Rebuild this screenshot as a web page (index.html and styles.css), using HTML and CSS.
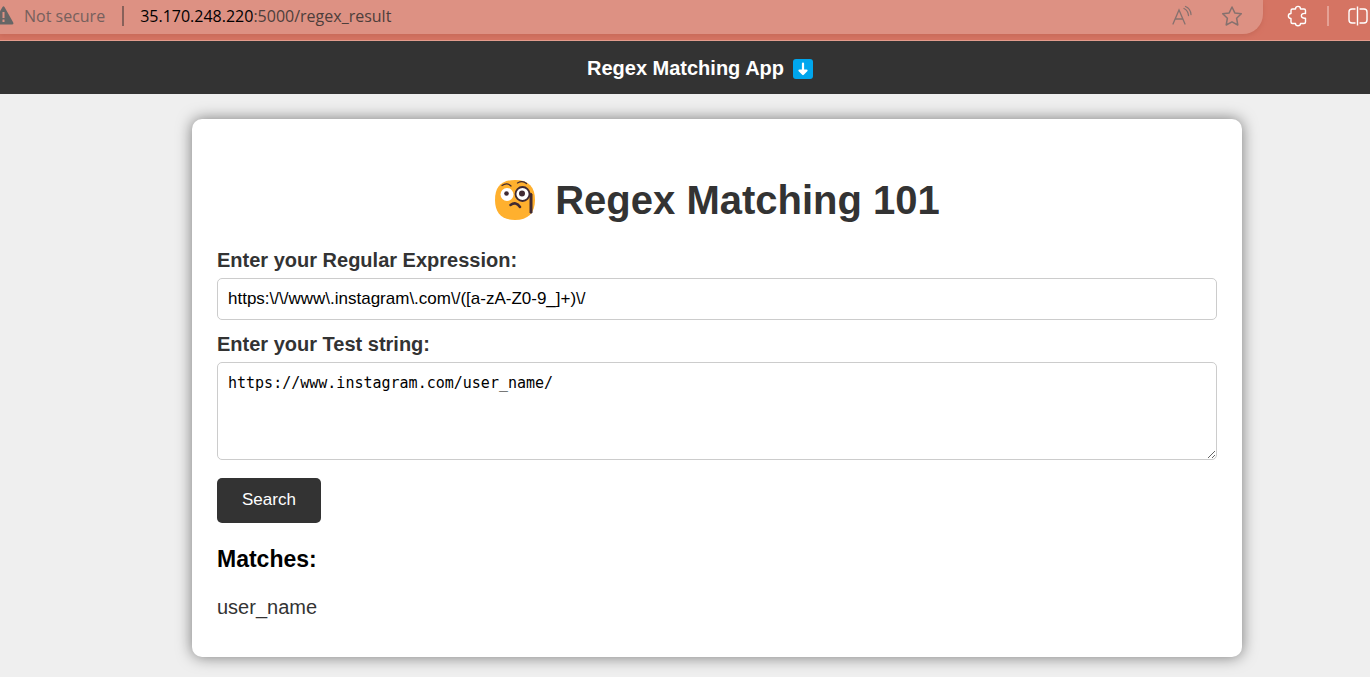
FILE: index.html
```html
<!DOCTYPE html>
<html lang="en">
<head>
<meta charset="utf-8">
<meta name="viewport" content="width=device-width, initial-scale=1">
<title>Regex Matching App</title>
<link rel="stylesheet" href="styles.css">
</head>
<body>
<div class="browser-bar">
  <div class="address">
    <svg class="warning" width="14" height="20" viewBox="0 0 14 20" aria-hidden="true">
      <path d="M2.500 1Q3.500-.5 4.500 1L13.200 16.500Q14 18.500 12 18.500H-6Q-7.500 18.500-6.500 16.500Z" fill="#666"/>
      <path d="M3.500 6v6M3.500 13.500v2.500" stroke="#dd9183" stroke-width="2"/>
    </svg>
    <span class="security">Not secure</span>
    <span class="divider"></span>
    <span class="url"><span class="host">35.170.248.220</span>:5000/regex_result</span>
    <button class="icon-button read" type="button" aria-label="Read aloud">
      <svg width="22" height="22" viewBox="0 0 22 22" fill="none" stroke="#86716e" stroke-width="1.300" stroke-linecap="round">
        <path d="M2 19 8 5l6 14M4.300 14h7.500M13 3.500q4 2 4.500 7M14.500 1.500q5 2 5.500 8"/>
      </svg>
    </button>
    <button class="icon-button" type="button" aria-label="Add to favorites">
      <svg width="22" height="22" viewBox="0 0 22 22" fill="none" stroke="#86716e" stroke-width="1.500" stroke-linejoin="round">
        <path d="m11 2 2.800 5.900 6.500.8-4.700 4.500 1.200 6.800-5.800-3.200L5.200 20l1.200-6.800L1.700 8.700l6.500-.8Z"/>
      </svg>
    </button>
  </div>
  <button class="icon-button extensions" type="button" aria-label="Extensions">
    <svg width="22" height="22" viewBox="0 0 22 22" fill="none" stroke="#fff" stroke-width="1.400" stroke-linejoin="round">
      <path d="M5.500 4H8.500c0-3.500 5-3.500 5 0h3.500q1.500 0 1.500 1.500V8.500c-5.500-1-5.500 5.500 0 4.700V17q0 1.500-1.500 1.500H13.500c0 3-5 3-5 0H5.500Q4 18.500 4 17v-3.500c-3.500 0-3.500-5 0-5v-3Q4 4 5.500 4Z"/>
    </svg>
  </button>
  <span class="divider light"></span>
  <button class="icon-button split" type="button" aria-label="Split screen">
    <svg width="22" height="22" viewBox="0 0 22 22" fill="none" stroke="#fff" stroke-width="1.400">
      <path d="M8.500 4H5Q2 4 2 7v8q0 3 3 3h3.500M12.500 4H17q3 0 3 3v8q0 3-3 3h-4.500M10.500 1.500v19"/>
    </svg>
  </button>
</div>
<header class="site-header">
  <span>Regex Matching App</span>
  <svg width="20" height="20" viewBox="0 0 20 20" role="img" aria-label="Down arrow">
    <rect width="20" height="20" rx="3" fill="#00a6ed"/>
    <path d="M10 4.500v10M6.500 11.500 10 15l3.500-3.500Z" fill="#fff" stroke="#fff" stroke-width="2.200" stroke-linecap="round" stroke-linejoin="round"/>
  </svg>
</header>
<main class="card">
  <h1 class="title">
    <svg width="42" height="42" viewBox="0 0 42 42" role="img" aria-label="Face with monocle">
      <path d="M21 1C35 1 41 8 41 21S34 41 21 41 1 34 1 21 7 1 21 1Z" fill="#ffb02e"/>
      <circle cx="13" cy="15.500" r="6.500" fill="#fff"/>
      <circle cx="12.500" cy="14.500" r="2.300" fill="#402a32"/>
      <circle cx="28.500" cy="15" r="7" fill="#fff" stroke="#402a32" stroke-width="1.800"/>
      <circle cx="28" cy="14.500" r="3" fill="#402a32"/>
      <path d="M8 6.500q5-3.500 9 .5M23.500 4q5-3 9 .5" fill="none" stroke="#402a32" stroke-width="1.200" stroke-linecap="round"/>
      <path d="M36 15h2v19h-2ZM36 14l2 1" fill="#402a32" stroke="#402a32" stroke-linejoin="round"/>
      <path d="M16.500 26q5.500-4 9.500 2" fill="none" stroke="#402a32" stroke-width="2.600" stroke-linecap="round"/>
    </svg>
    <span>Regex Matching 101</span>
  </h1>
  <form class="form">
    <label class="label" for="regex">Enter your Regular Expression:</label>
    <input class="field" id="regex" type="text" value="https:\/\/www\.instagram\.com\/([a-zA-Z0-9_]+)\/">
    <label class="label" for="test">Enter your Test string:</label>
    <textarea class="field area" id="test" spellcheck="false">https://www.instagram.com/user_name/</textarea>
    <button class="search" type="button">Search</button>
  </form>
  <h2 class="matches">Matches:</h2>
  <p class="result">user_name</p>
</main>
</body>
</html>
```
FILE: styles.css
```css
* { box-sizing: border-box; }
body {
  margin: 0;
  background: #efefef;
  color: #333;
  font-family: "Liberation Sans", Arial, sans-serif;
  font-size: 20px;
}
.browser-bar {
  display: flex;
  align-items: flex-start;
  height: 41px;
  overflow: hidden;
  background: #d57463;
  border-bottom: 1px solid #e39c8d;
  font-family: "Open Sans", "Noto Sans", sans-serif;
  font-size: 16px;
}
.address {
  display: flex;
  flex: 1;
  align-items: center;
  height: 34px;
  padding: 0 20px 2px 0;
  background: #dd9183;
  border-radius: 0 0 20px 0;
  box-shadow: 0 2px 4px #c76a59;
}
.warning { flex: none; margin-right: 10px; }
.security { color: #76605d; }
.divider {
  width: 2px;
  height: 20px;
  margin: 0 16px 0 17px;
  background: #87615a;
}
.url { flex: 1; color: #4d3e3b; }
.host { color: #000; }
.icon-button {
  display: flex;
  flex: none;
  padding: 0;
  background: none;
  border: 0;
}
.read { margin-right: 28px; }
.extensions { margin: 5px 0 0 24px; }
.light {
  margin: 6px 18px 0;
  background: #e5a195;
}
.split { margin: 5px 1px 0 0; }
.site-header {
  display: flex;
  justify-content: center;
  align-items: center;
  gap: 9px;
  padding: 16px 0 14px 30px;
  background: #333;
  color: #fff;
  font-weight: bold;
  line-height: 23px;
}
.card {
  width: calc(100% - 320px);
  max-width: 1050px;
  margin: 25px 128px 20px auto;
  padding: 25px;
  background: #fff;
  border-radius: 10px;
  box-shadow: 0 0 15px rgba(0, 0, 0, 0.5);
}
.title {
  display: flex;
  justify-content: center;
  align-items: center;
  gap: 19px;
  margin: 33px 0 26px;
  font-size: 40px;
  line-height: 46px;
}
.form {
  display: flex;
  flex-direction: column;
  align-items: flex-start;
}
.label {
  margin-bottom: 6px;
  font-weight: bold;
  line-height: 23px;
}
.field {
  width: 100%;
  height: 42px;
  margin: 0 0 13px;
  padding: 10px;
  border: 1px solid #ccc;
  border-radius: 5px;
  background: #fff;
  color: #000;
  font-family: "Liberation Sans", Arial, sans-serif;
  font-size: 17px;
}
.area {
  height: 98px;
  margin-bottom: 18px;
  padding-top: 11px;
  font-family: Consolas, "DejaVu Sans Mono", monospace;
  font-size: 15px;
  resize: vertical;
}
.search {
  padding: 12px 25px 14px;
  border: 0;
  border-radius: 5px;
  background: #333;
  color: #fff;
  font-family: inherit;
  font-size: 17px;
  line-height: 19px;
}
.matches {
  margin: 23px 0 24px;
  color: #000;
  font-size: 23px;
  line-height: 26px;
}
.result {
  margin: 0 0 13px;
  line-height: 23px;
}
```
